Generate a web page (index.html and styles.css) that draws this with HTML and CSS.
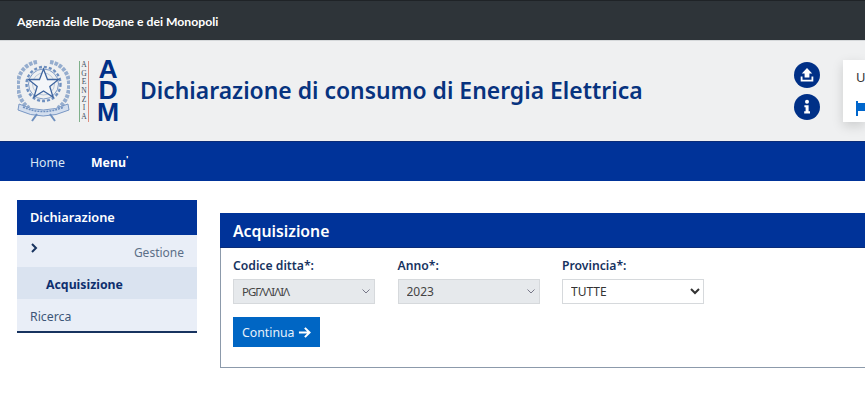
FILE: index.html
```html
<!DOCTYPE html>
<html lang="it">
<head>
  <meta charset="UTF-8" />
  <meta name="viewport" content="width=device-width, initial-scale=1.0"/>
  <title>Dichiarazione di consumo di Energia Elettrica</title>
  <link rel="stylesheet" href="styles.css">
</head>
<body>
  <div class="top-bar">Agenzia delle Dogane e dei Monopoli</div>

  <header class="site-header">
    <div class="logo">
      <svg class="emblem" viewBox="0 0 53 62" aria-hidden="true">
        <g fill="none" stroke="#6f90bf">
          <!-- wreath -->
          <path d="M20 2 C7 4 0 15 1 27 C1.500 36 5 43 12 48" stroke-width="4" stroke-dasharray="3.500 1.200" stroke-opacity="0.7"/>
          <path d="M33 2 C46 4 53 15 52 27 C51.500 36 48 43 41 48" stroke-width="4" stroke-dasharray="3.500 1.200" stroke-opacity="0.7"/>
          <!-- cog wheel -->
          <circle cx="26.500" cy="24" r="17" stroke-width="2.400" stroke-dasharray="3 2"/>
          <circle cx="26.500" cy="24" r="15" stroke-width="0.900"/>
          <circle cx="26.500" cy="24" r="11" stroke-width="0.700" stroke-opacity="0.6"/>
          <path d="M26.500 9 30.500 19.500 41.500 19.500 32.800 26.500 36 37 26.500 31 17 37 20.200 26.500 11.500 19.500 22.500 19.500Z" fill="#f4f6f9" stroke="#3f659f" stroke-width="1.300"/>
          <!-- ribbon -->
          <path d="M2 44 Q26 56 51 44 L52 50 Q26 62 1 50Z" fill="#d3deee" stroke-width="0.900"/>
          <path d="M6 47 Q26 56 47 47" stroke="#6f90bf" stroke-width="1.500" stroke-dasharray="2 1"/>
          <path d="M20 54 15 61 M33 54 38 61" stroke-width="2"/>
        </g>
      </svg>
      <div class="agenzia">
        <span>A</span><span>G</span><span>E</span><span>N</span><span>Z</span><span>I</span><span>A</span>
      </div>
      <div class="adm"><span>A</span><span>D</span><span>M</span></div>
    </div>
    <h1 class="site-title">Dichiarazione di consumo di Energia Elettrica</h1>
    <div class="header-icons">
      <span class="round-icon">
        <svg viewBox="0 0 26 26" aria-hidden="true">
          <path d="M13 6 18.200 11.400H15.400V15.400H10.600V11.400H7.800Z" fill="#fff"/>
          <path d="M7.600 14.400V18.600H18.400V14.400" fill="none" stroke="#fff" stroke-width="1.800"/>
        </svg>
      </span>
      <span class="round-icon">
        <svg viewBox="0 0 26 26" aria-hidden="true">
          <circle cx="13" cy="7.800" r="2" fill="#fff"/>
          <path d="M10.400 11.200H14.600V17.200H16V19.400H10.200V17.200H11.600V13.300H10.400Z" fill="#fff"/>
        </svg>
      </span>
    </div>
    <div class="user-card">
      <span class="user-letter">U</span>
      <svg class="user-flag" viewBox="0 0 12 16" aria-hidden="true">
        <path d="M0 1H2V3H12V11H2V16H0Z" fill="#0066cc"/>
      </svg>
    </div>
  </header>

  <nav class="main-nav">
    <a class="nav-link" href="#">Home</a>
    <a class="nav-link nav-active" href="#">Menu<sup class="nav-mark">'</sup></a>
  </nav>

  <main class="content">
    <aside class="sidebar">
      <div class="sidebar-title">Dichiarazione</div>
      <div class="side-row side-gestione">
        <svg class="side-chevron" viewBox="0 0 8 10" aria-hidden="true">
          <path d="M2 1 6 5 2 9" fill="none" stroke="#17335f" stroke-width="2"/>
        </svg>
        <span>Gestione</span>
      </div>
      <div class="side-row side-current">Acquisizione</div>
      <div class="side-row">Ricerca</div>
    </aside>

    <section class="panel">
      <h2 class="panel-title">Acquisizione</h2>
      <form class="panel-body">
        <div class="fields">
          <div class="field">
            <label class="field-label" for="ditta">Codice ditta*:</label>
            <select class="field-select field-code" id="ditta" disabled>
              <option>PGΓΛΛΙΛΙΛ</option>
            </select>
          </div>
          <div class="field">
            <label class="field-label" for="anno">Anno*:</label>
            <select class="field-select" id="anno" disabled>
              <option>2023</option>
            </select>
          </div>
          <div class="field">
            <label class="field-label" for="provincia">Provincia*:</label>
            <select class="field-select" id="provincia">
              <option>TUTTE</option>
            </select>
          </div>
        </div>
        <button type="button" class="btn-continue">
          Continua
          <svg viewBox="0 0 14 14" aria-hidden="true">
            <path d="M1 7H12M7.400 2 12.400 7 7.400 12" fill="none" stroke="#fff" stroke-width="2.200"/>
          </svg>
        </button>
      </form>
    </section>
  </main>
</body>
</html>
```

FILE: styles.css
```css
html, body {
  overflow: hidden;
}
body {
  font-family: "Noto Sans", sans-serif;
  background: #fff;
  color: #17335f;
  margin: 0;
  padding: 0;
  width: 865px;
  height: 415px;
}
.top-bar {
  height: 40px;
  line-height: 41px;
  box-sizing: border-box;
  padding-left: 17px;
  background: #2e3439;
  border-top: 1px solid #1f2327;
  color: #fff;
  font-family: "Lato", sans-serif;
  font-size: 12.2px;
  font-weight: 700;
}
.site-header {
  height: 101px;
  display: flex;
  align-items: center;
  padding-left: 17px;
  background: #eff0f1;
  border-top: 1px solid #d5d8da;
  box-sizing: border-box;
}
.logo {
  display: flex;
  align-items: center;
  width: 123px;
  flex-shrink: 0;
}
.emblem {
  width: 53px;
  height: 62px;
  margin-right: 9px;
}
.agenzia {
  width: 8px;
  height: 61px;
  display: flex;
  flex-direction: column;
  justify-content: space-around;
  align-items: center;
  border-left: 1px solid #7fb08a;
  border-right: 1px solid #dc8f80;
  font-family: "Liberation Serif", serif;
  font-size: 7.5px;
  line-height: 8px;
  color: #3e4c60;
}
.adm {
  display: flex;
  flex-direction: column;
  align-items: center;
  margin-left: 8px;
  font-family: "Liberation Sans", sans-serif;
  font-size: 26.5px;
  font-weight: 700;
  line-height: 21.5px;
  color: #003087;
}
.site-title {
  flex: 1;
  margin: 0 0 1px;
  font-size: 22.9px;
  font-weight: 600;
  color: #07337f;
  white-space: nowrap;
}
.header-icons {
  display: flex;
  flex-direction: column;
  gap: 6px;
  margin-right: 23px;
}
.round-icon {
  width: 26px;
  height: 26px;
  border-radius: 50%;
  background: #003087;
  display: block;
}
.round-icon svg {
  width: 26px;
  height: 26px;
  display: block;
}
.user-card {
  width: 22px;
  height: 62px;
  box-sizing: border-box;
  padding: 7px 0 0 13px;
  background: #fff;
  box-shadow: 0 4px 12px rgba(0, 0, 0, 0.15);
  overflow: hidden;
  flex-shrink: 0;
}
.user-letter {
  display: block;
  font-size: 13px;
  line-height: 20px;
  color: #333;
}
.user-flag {
  display: block;
  width: 12px;
  height: 16px;
  margin-top: 13px;
}
.main-nav {
  height: 40px;
  display: flex;
  align-items: center;
  gap: 26px;
  padding: 2px 0 0 30px;
  background: #003399;
  border-top: 1px solid #0a2c78;
  box-sizing: border-box;
}
.nav-link {
  color: #d9e6f5;
  font-size: 12.3px;
  text-decoration: none;
}
.nav-active {
  color: #fff;
  font-weight: 700;
}
.nav-mark {
  font-size: 9px;
  line-height: 0;
}
.content {
  display: flex;
  align-items: flex-start;
  gap: 23px;
  padding: 19px 0 0 17px;
}
.sidebar {
  width: 180px;
  flex-shrink: 0;
  background: #e9eef7;
  border-bottom: 2px solid #17335f;
}
.sidebar-title {
  height: 35px;
  line-height: 35px;
  padding-left: 13px;
  background: #003399;
  color: #fff;
  font-size: 12.8px;
  font-weight: 600;
}
.side-row {
  height: 32px;
  line-height: 35px;
  padding-left: 13px;
  font-size: 12.3px;
  color: #3d5678;
}
.side-gestione {
  display: flex;
  justify-content: space-between;
  padding-right: 13px;
}
.side-gestione span {
  font-size: 12px;
  color: #5c6f88;
}
.side-chevron {
  width: 8px;
  height: 10px;
  margin-top: 8px;
}
.side-current {
  padding-left: 29px;
  background: #dae3f0;
  font-weight: 700;
  color: #0e2f6e;
}
.panel {
  flex: 1;
  margin-top: 13px;
  border: 1px solid #8c9aab;
  border-top: 0;
  border-right: 0;
  border-bottom-width: 1.5px;
  box-sizing: border-box;
  height: 155px;
}
.panel-title {
  height: 35px;
  line-height: 36px;
  margin: 0 0 0 -1px;
  padding-left: 13px;
  background: #003399;
  border-bottom: 1px solid #0a2c78;
  box-sizing: border-box;
  color: #fff;
  font-size: 15.8px;
  font-weight: 600;
}
.panel-body {
  padding: 9px 12px 0;
}
.fields {
  display: flex;
  gap: 22.5px;
}
.field {
  width: 142px;
}
.field-label {
  display: block;
  height: 18px;
  line-height: 18px;
  margin-bottom: 4px;
  font-size: 12.2px;
  font-weight: 600;
  color: #17335f;
}
.field-select {
  width: 142px;
  height: 25px;
  padding: 0 4px;
  font-family: "Noto Sans", sans-serif;
  font-size: 12px;
  color: #333;
  background: #fff;
  border: 1px solid #d6d9dc;
  border-radius: 0;
  opacity: 1;
}
.field-select:disabled {
  appearance: none;
  padding-left: 8px;
  background: #e6e9ec url("data:image/svg+xml,%3Csvg xmlns='http://www.w3.org/2000/svg' width='8' height='5'%3E%3Cpath d='M.5.5 4 4 7.500.5' fill='none' stroke='%23778'/%3E%3C/svg%3E") no-repeat right 4px center;
  color: #444;
}
.field-code {
  font-size: 11.5px;
  letter-spacing: -1px;
}
.btn-continue {
  display: flex;
  align-items: center;
  gap: 3px;
  height: 30px;
  margin-top: 13px;
  padding: 0 9px;
  background: #0066c4;
  border: none;
  color: #e8f1fb;
  font-family: "Noto Sans", sans-serif;
  font-size: 12.3px;
}
.btn-continue svg {
  width: 13px;
  height: 13px;
}
```
